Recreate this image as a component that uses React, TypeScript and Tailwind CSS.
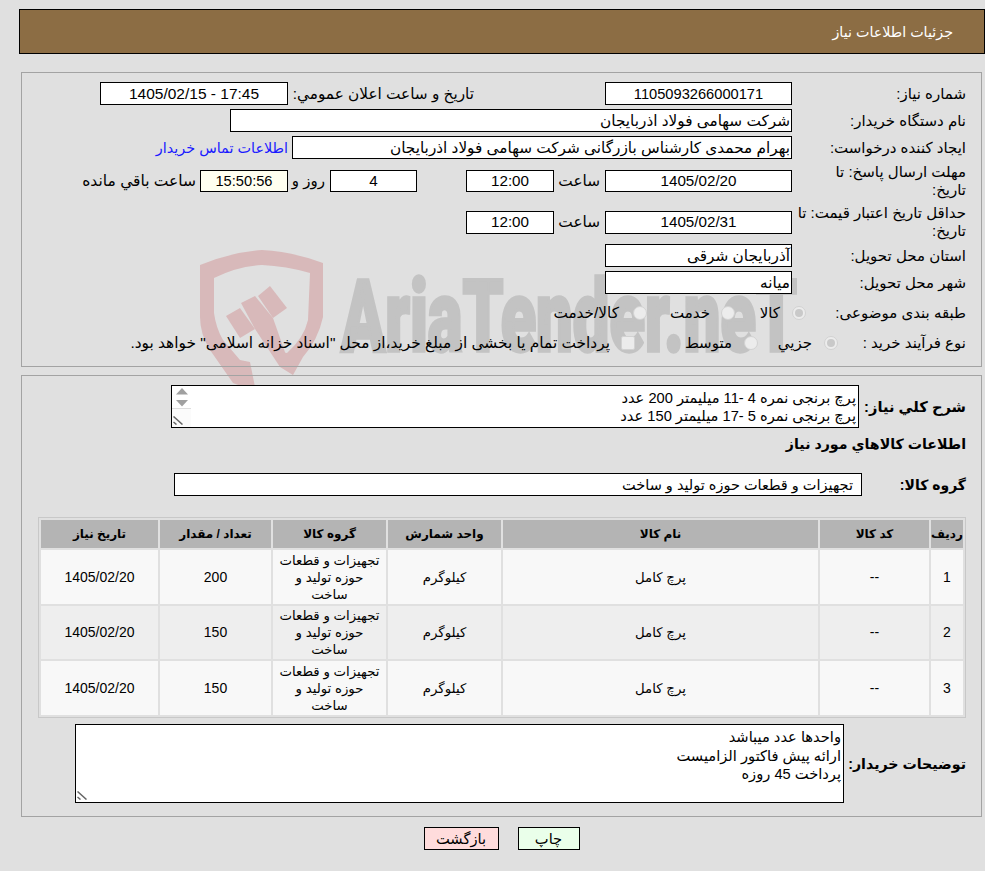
import React from 'react';

const rows = [
  { id: '1', qty: '200', bg: 'bg-[#f8f8f8]', h: 'h-[54px]' },
  { id: '2', qty: '150', bg: 'bg-[#eeeeee]', h: 'h-[53px]' },
  { id: '3', qty: '150', bg: 'bg-[#f8f8f8]', h: 'h-[54px]' },
];

const Box = ({ className, children }: { className: string; children?: React.ReactNode }) => (
  <div className={`flex shrink-0 items-center border border-black ${className}`}>{children}</div>
);

const Radio = ({ checked }: { checked?: boolean }) => (
  <span className="flex size-[14px] shrink-0 items-center justify-center rounded-full border border-[#d2d2d2] bg-[#ececec]">
    {checked && <span className="size-[8px] rounded-full bg-[#c9c9c9]" />}
  </span>
);

const Grip = ({ className }: { className: string }) => (
  <svg className={`pointer-events-none absolute ${className}`} width="10" height="9" viewBox="0 0 10 9">
    <path d="M0.5 0.5 L9.5 8.5 M0.5 6 L3.5 8.5" stroke="#666666" strokeWidth="1.5" fill="none" />
  </svg>
);

const Watermark = () => (
  <svg className="absolute left-0 top-0 [direction:ltr]" width="985" height="871" viewBox="0 0 985 871">
    {/* shield */}
    <path
      fill="#d8b9ba"
      d="M200 265 Q232 252 262 250 Q294 252 323 263 L323 317 Q318 340 303 357 L293 375 L270 350 L287 353 Q304 338 308 320 L310 273 Q286 266 262 265 Q238 266 214 278 L214 313 Q216 328 223 340 L240 360 L250 362 L256 392 L233 383 L210 350 Q200 334 200 317 Z"
    />
    {/* hammer */}
    <path fill="#d8b9ba" d="M226 316 L240 308 L255 329 L240 338 Z" />
    <path fill="#d8b9ba" d="M241 303 L255 296 L273 318 L293 375 L280 367 L255 329 Z" />
    <path fill="#d8b9ba" d="M258 296 L270 286 L287 308 L273 318 Z" />
    <text
      x="341"
      y="351"
      direction="ltr"
      textAnchor="start"
      fill="#c3c3c3"
      stroke="#c3c3c3"
      strokeWidth="3.5"
      fontFamily="Roboto, sans-serif"
      fontWeight="900"
      fontSize="100"
      textLength="456"
      lengthAdjust="spacingAndGlyphs"
    >
      AriaTender.neT
    </text>
  </svg>
);

export default function App() {
  return (
    <div
      dir="rtl"
      className="relative min-h-[871px] w-full overflow-hidden bg-[#e0e0e0] font-['Liberation_Sans','DejaVu_Sans',sans-serif] text-[15px] leading-[18px] text-black"
    >
      <Watermark />
      <div className="relative flex flex-col pt-[9px]">
        <div className="mr-0 ml-[19px] flex h-[45px] items-center border border-black bg-[#8c6d44] pr-[31px] text-[14.3px] text-white">
          جزئیات اطلاعات نیاز
        </div>

        <section className="mr-[3px] ml-[21px] mt-[18px] h-[295px] border border-[#a3a3a3] pr-[15px] pt-[9px]">
          <div className="flex h-[23px] items-center">
            <div className="w-[174px] shrink-0">شماره نیاز:</div>
            <Box className="h-[23px] w-[187px] justify-center bg-white text-[14.67px]">1105093266000171</Box>
            <div className="mr-[131px] w-[186px] shrink-0 text-[15.3px]">تاریخ و ساعت اعلان عمومي:</div>
            <Box className="h-[23px] w-[188px] justify-center bg-white text-[15.5px]">
              <span dir="ltr">1405/02/15 - 17:45</span>
            </Box>
          </div>
          <div className="mt-[4px] flex h-[23px] items-center">
            <div className="w-[174px] shrink-0">نام دستگاه خریدار:</div>
            <Box className="h-[23px] w-[562px] bg-white pr-[1px] text-[15.3px]">شرکت سهامی فولاد اذربایجان</Box>
          </div>
          <div className="mt-[4px] flex h-[23px] items-center">
            <div className="w-[174px] shrink-0">ایجاد کننده درخواست:</div>
            <Box className="h-[23px] w-[500px] bg-white pr-[1px] text-[15.3px]">بهرام محمدی کارشناس بازرگانی شرکت سهامی فولاد اذربایجان</Box>
            <a href="#" className="mr-[4px] text-[14.4px] text-[#1a1aff]">اطلاعات تماس خریدار</a>
          </div>
          <div className="mt-[3px] flex h-[38px] items-center">
            <div className="w-[174px] shrink-0 pl-[20px]">مهلت ارسال پاسخ: تا تاریخ:</div>
            <Box className="h-[22px] w-[187px] justify-center bg-white text-[15.2px]">1405/02/20</Box>
            <div className="w-[51px] shrink-0 pr-[5px] text-[15.3px]">ساعت</div>
            <Box className="h-[22px] w-[88px] justify-center bg-white text-[15.2px]">12:00</Box>
            <Box className="mr-[49px] h-[22px] w-[87px] justify-center bg-white text-[15.2px]">4</Box>
            <div className="w-[42px] shrink-0 pr-[5px]">روز و</div>
            <Box className="h-[22px] w-[88px] justify-center bg-[#fffff0] text-[14.67px]">15:50:56</Box>
            <div className="shrink-0 pr-[4px] text-[15.5px]">ساعت باقي مانده</div>
          </div>
          <div className="mt-[3px] flex h-[38px] items-center">
            <div className="w-[174px] shrink-0">حداقل تاریخ اعتبار قیمت: تا تاریخ:</div>
            <Box className="h-[23px] w-[187px] justify-center bg-white text-[15.2px]">1405/02/31</Box>
            <div className="w-[51px] shrink-0 pr-[5px] text-[15.3px]">ساعت</div>
            <Box className="h-[23px] w-[88px] justify-center bg-white text-[15.2px]">12:00</Box>
          </div>
          <div className="mt-[3px] flex h-[23px] items-center">
            <div className="w-[174px] shrink-0">استان محل تحویل:</div>
            <Box className="h-[23px] w-[187px] bg-white pr-[1px] text-[15.3px]">آذربایجان شرقی</Box>
          </div>
          <div className="mt-[4px] flex h-[23px] items-center">
            <div className="w-[174px] shrink-0">شهر محل تحویل:</div>
            <Box className="h-[23px] w-[187px] bg-white pr-[1px] text-[15.3px]">میانه</Box>
          </div>
          <div className="mt-[4px] flex h-[30px] items-center">
            <div className="w-[160px] shrink-0">طبقه بندی موضوعی:</div>
            <div className="flex w-[71px] shrink-0 items-center gap-[12px]"><Radio checked /><span>کالا</span></div>
            <div className="flex w-[88px] shrink-0 items-center gap-[11px]"><Radio /><span>خدمت</span></div>
            <div className="flex shrink-0 items-center gap-[14px]"><Radio /><span className="text-[15.3px]">کالا/خدمت</span></div>
          </div>
          <div className="flex h-[30px] items-center">
            <div className="w-[128px] shrink-0">نوع فرآیند خرید :</div>
            <div className="flex w-[80px] shrink-0 items-center gap-[12px]"><Radio checked /><span>جزيي</span></div>
            <div className="flex w-[123px] shrink-0 items-center gap-[12px]"><Radio /><span>متوسط</span></div>
            <div className="flex shrink-0 items-center gap-[11px]">
              <span className="size-[14px] shrink-0 rounded-[2px] border border-[#d2d2d2] bg-[#ececec]" />
              <span className="text-[15.4px]">پرداخت تمام یا بخشی از مبلغ خرید،از محل "اسناد خزانه اسلامی" خواهد بود.</span>
            </div>
          </div>
        </section>

        <section className="mr-[3px] ml-[21px] mt-[8px] border border-[#a3a3a3] pr-[15px] pt-[9px] pb-[13px] text-[14.67px]">
          <div className="flex h-[43px] items-center">
            <div className="w-[107px] shrink-0 font-bold">شرح کلي نیاز:</div>
            <div className="relative h-[43px] w-[688px] shrink-0">
              <textarea
                readOnly
                className="block h-full w-full resize-none overflow-hidden border border-black bg-white px-[2px] pt-[3px] leading-[18px] outline-none"
                defaultValue={'پرچ برنجی نمره 4 -11 میلیمتر 200 عدد\nپرچ برنجی نمره 5 -17 میلیمتر 150 عدد'}
              />
              <svg className="absolute left-[1px] top-[1px]" width="19" height="41" viewBox="0 0 19 41">
                <rect width="19" height="41" fill="#fbfbfb" />
                <rect width="19" height="23" fill="#ffffff" />
                <path d="M4 8.5 L10 2 L16 8.5 Z" fill="#a0a0a0" />
                <path d="M4 14 L16 14 L10 20.5 Z" fill="#a0a0a0" />
                <line x1="0" y1="22.5" x2="19" y2="22.5" stroke="#dedede" />
              </svg>
              <Grip className="left-[2px] bottom-[3px]" />
            </div>
          </div>
          <div className="mt-[6px] flex h-[20px] items-center text-[14.2px] font-bold">اطلاعات کالاهاي مورد نیاز</div>
          <div className="mt-[19px] flex h-[23px] items-center">
            <div className="w-[104px] shrink-0 text-[14px] font-bold">گروه کالا:</div>
            <Box className="h-[23px] w-[688px] bg-white pr-[8px] text-[14.5px]">تجهیزات و قطعات حوزه تولید و ساخت</Box>
          </div>

          <table className="mt-[21px] w-[928px] table-fixed border-separate border-spacing-[2px] border border-[#c8c8c8] text-center text-[13.3px] leading-[17px]">
            <colgroup>
              <col className="w-[32px]" />
              <col className="w-[109px]" />
              <col className="w-[315px]" />
              <col className="w-[113px]" />
              <col className="w-[113px]" />
              <col className="w-[111px]" />
              <col className="w-[117px]" />
            </colgroup>
            <thead>
              <tr className="h-[28px] bg-[#b4b4b4] text-[12px] font-bold">
                <th>ردیف</th>
                <th>کد کالا</th>
                <th>نام کالا</th>
                <th>واحد شمارش</th>
                <th>گروه کالا</th>
                <th>تعداد / مقدار</th>
                <th>تاریخ نیاز</th>
              </tr>
            </thead>
            <tbody>
              {rows.map((r) => (
                <tr key={r.id} className={`${r.h} ${r.bg}`}>
                  <td className="text-[14px]">{r.id}</td>
                  <td className="text-[14px]">--</td>
                  <td>پرچ کامل</td>
                  <td>کیلوگرم</td>
                  <td className="px-[6px]">تجهیزات و قطعات حوزه تولید و ساخت</td>
                  <td className="text-[14px]">{r.qty}</td>
                  <td className="text-[14px]">1405/02/20</td>
                </tr>
              ))}
            </tbody>
          </table>

          <div className="mt-[6px] flex h-[79px] items-center">
            <div className="w-[122px] shrink-0 text-[14.2px] font-bold">توضیحات خریدار:</div>
            <div className="relative h-[79px] w-[769px] shrink-0">
              <textarea
                readOnly
                className="block h-full w-full resize-none border border-black bg-white px-[2px] pt-[3px] leading-[18.5px] outline-none"
                defaultValue={'واحدها عدد میباشد\nارائه پیش فاکتور الزامیست\nپرداخت 45 روزه'}
              />
              <Grip className="left-[2px] bottom-[3px]" />
            </div>
          </div>
        </section>

        <div className="mt-[10px] ml-[21px] mr-[3px] flex justify-center gap-[19px] text-[14.67px]">
          <button className="h-[23px] w-[62px] border border-black bg-[#eaffea]">چاپ</button>
          <button className="h-[23px] w-[75px] border border-black bg-[#ffdcdc]">بازگشت</button>
        </div>
      </div>
    </div>
  );
}
